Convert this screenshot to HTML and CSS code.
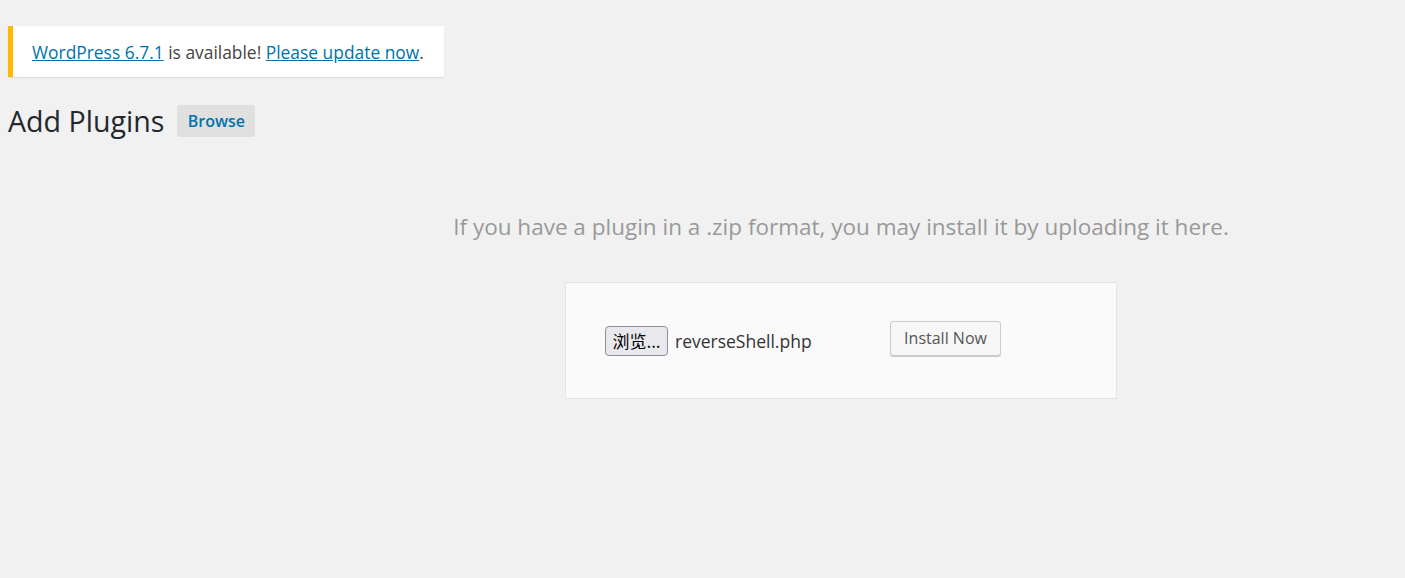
FILE: index.html
```html
<!DOCTYPE html>
<html>
<head>
<meta charset="utf-8">
<link rel="stylesheet" href="styles.css">
</head>
<body>
<div class="wrap">
  <div class="notice">
    <p><a href="#">WordPress 6.7.1</a> is available! <a href="#">Please update now</a>.</p>
  </div>
  <div class="title-row">
    <h1>Add Plugins</h1>
    <a class="title-action" href="#">Browse</a>
  </div>
  <div class="upload-plugin">
    <p class="install-help">If you have a plugin in a .zip format, you may install it by uploading it here.</p>
    <form class="upload-form">
      <div class="file-field">
        <span class="file-btn">浏览...</span>
        <span class="file-name">reverseShell.php</span>
      </div>
      <span class="install-btn">Install Now</span>
    </form>
  </div>
</div>
</body>
</html>
```
FILE: styles.css
```css
html, body {
  margin: 0;
  padding: 0;
  background: #f1f1f1;
}
body {
  font-family: "Open Sans", "Noto Sans", sans-serif;
  color: #444;
  padding: 0 8px;
}
.wrap {
  padding-top: 26px;
}
.notice {
  width: 431px;
  height: 51px;
  background: #fff;
  border-left: 5px solid #ffb900;
  box-shadow: 0 1px 1px rgba(0,0,0,0.08);
  display: flex;
  align-items: center;
  box-sizing: content-box;
}
.notice p {
  margin: 1px 0 0 19px;
  font-size: 17.4px;
  color: #444;
  white-space: nowrap;
}
.notice a {
  color: #0073aa;
  text-decoration: underline;
}
.title-row {
  display: flex;
  align-items: center;
  margin-top: 27px;
  height: 34px;
}
.title-row h1 {
  margin: 0;
  font-size: 28.6px;
  font-weight: 400;
  color: #23282d;
  line-height: 34px;
}
.title-action {
  margin-left: 13px;
  background: #e0e0e0;
  color: #0073aa;
  font-weight: 600;
  font-size: 16px;
  text-decoration: none;
  height: 32px;
  width: 78px;
  display: flex;
  align-items: center;
  justify-content: center;
  border-radius: 2px;
}
.upload-plugin {
  width: 800px;
  margin-left: 433px;
  display: flex;
  flex-direction: column;
  align-items: center;
}
.install-help {
  margin: 72px 0 0 0;
  font-size: 22.5px;
  color: #999;
  white-space: nowrap;
  line-height: 34px;
}
.upload-form {
  margin: 38px 0 0 0;
  width: 511px;
  height: 115px;
  background: #fafafa;
  border: 1px solid #e5e5e5;
  display: flex;
  align-items: center;
  padding: 0 0 0 39px;
  box-sizing: content-box;
}
.file-field {
  display: flex;
  align-items: center;
  width: 285px;
}
.file-btn {
  font-family: "Noto Sans CJK SC", "Noto Sans", sans-serif;
  font-size: 17px;
  color: #000;
  background: #e9e9ed;
  border: 1px solid #8f8f9d;
  border-radius: 4px;
  height: 28px;
  width: 61px;
  display: flex;
  align-items: center;
  justify-content: center;
  box-sizing: content-box;
  line-height: 1;
}
.file-name {
  margin-left: 7px;
  font-size: 17.5px;
  color: #333;
}
.install-btn {
  margin-top: -5px;
  font-size: 16px;
  color: #555;
  background: #f7f7f7;
  border: 1px solid #ccc;
  border-radius: 3px;
  box-shadow: 0 1px 0 #ccc;
  height: 33px;
  width: 109px;
  display: flex;
  align-items: center;
  justify-content: center;
}
```
